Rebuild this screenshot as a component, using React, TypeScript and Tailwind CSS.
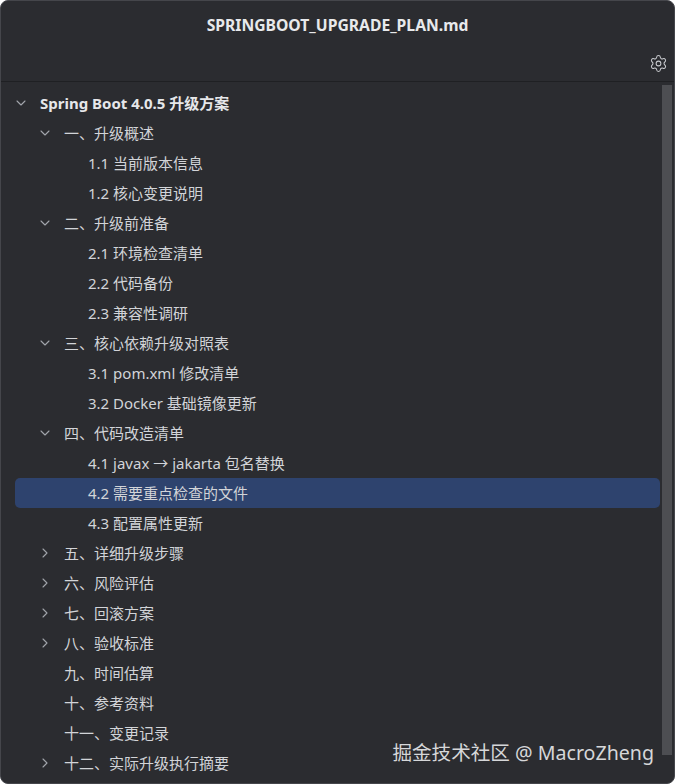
import React from "react";
import { ChevronDown, ChevronRight, Settings } from "lucide-react";

type Node = {
  label: string;
  level: number;
  arrow?: "open" | "closed";
  bold?: boolean;
  selected?: boolean;
};

const items: Node[] = [
  { label: "Spring Boot 4.0.5 升级方案", level: 0, arrow: "open", bold: true },
  { label: "一、升级概述", level: 1, arrow: "open" },
  { label: "1.1 当前版本信息", level: 2 },
  { label: "1.2 核心变更说明", level: 2 },
  { label: "二、升级前准备", level: 1, arrow: "open" },
  { label: "2.1 环境检查清单", level: 2 },
  { label: "2.2 代码备份", level: 2 },
  { label: "2.3 兼容性调研", level: 2 },
  { label: "三、核心依赖升级对照表", level: 1, arrow: "open" },
  { label: "3.1 pom.xml 修改清单", level: 2 },
  { label: "3.2 Docker 基础镜像更新", level: 2 },
  { label: "四、代码改造清单", level: 1, arrow: "open" },
  { label: "4.1 javax → jakarta 包名替换", level: 2 },
  { label: "4.2 需要重点检查的文件", level: 2, selected: true },
  { label: "4.3 配置属性更新", level: 2 },
  { label: "五、详细升级步骤", level: 1, arrow: "closed" },
  { label: "六、风险评估", level: 1, arrow: "closed" },
  { label: "七、回滚方案", level: 1, arrow: "closed" },
  { label: "八、验收标准", level: 1, arrow: "closed" },
  { label: "九、时间估算", level: 1 },
  { label: "十、参考资料", level: 1 },
  { label: "十一、变更记录", level: 1 },
  { label: "十二、实际升级执行摘要", level: 1, arrow: "closed" },
];

const indent = ["pl-0", "pl-[24px]", "pl-[48px]"];

function Row({ node }: { node: Node }) {
  return (
    <div
      className={`flex h-[30px] items-center rounded-[5px] ${indent[node.level]} ${
        node.selected ? "bg-[#2e436e]" : ""
      }`}
    >
      <span className="flex w-[25px] shrink-0 items-center text-[#a2a5ab]">
        {node.arrow === "open" && (
          <ChevronDown size={16} strokeWidth={1.6} className="-ml-[2px]" />
        )}
        {node.arrow === "closed" && (
          <ChevronRight size={16} strokeWidth={1.6} className="-ml-[2px]" />
        )}
      </span>
      <span
        className={`whitespace-nowrap text-[15px] leading-none ${
          node.bold ? "font-bold text-[#e6e7ea]" : "text-[#d2d4d8]"
        }`}
      >
        {node.label}
      </span>
    </div>
  );
}

export default function App() {
  return (
    <div
      className="relative flex h-[784px] w-[675px] flex-col overflow-hidden rounded-[8px] border border-[#45464b] bg-[#2b2c30]"
      style={{ fontFamily: '"Noto Sans", "Noto Sans CJK SC", sans-serif' }}
    >
      <header className="flex h-[81px] shrink-0 flex-col border-b border-[#1f2023]">
        <div className="flex h-[49px] items-center justify-center text-[15.7px] font-bold text-[#e8e9eb]">
          SPRINGBOOT_UPGRADE_PLAN.md
        </div>
        <div className="flex flex-1 items-start justify-end pr-[6px] pt-[4px] text-[#c8cace]">
          <Settings size={19} strokeWidth={1.3} />
        </div>
      </header>
      <div className="flex min-h-0 flex-1">
        <div className="flex flex-1 flex-col pl-[14px] pr-[2px] pt-[6px]">
          {items.map((n) => (
            <Row key={n.label} node={n} />
          ))}
        </div>
        <div className="flex w-[12px] shrink-0 flex-col pb-[28px] pr-[2px] pt-[3px]">
          <div className="flex-1 bg-[#4d4e52]" />
        </div>
      </div>
      <div className="absolute bottom-[20px] right-[20px] whitespace-nowrap text-[19.6px] leading-none text-[#d6d7d9]">
        掘金技术社区 @ MacroZheng
      </div>
    </div>
  );
}
